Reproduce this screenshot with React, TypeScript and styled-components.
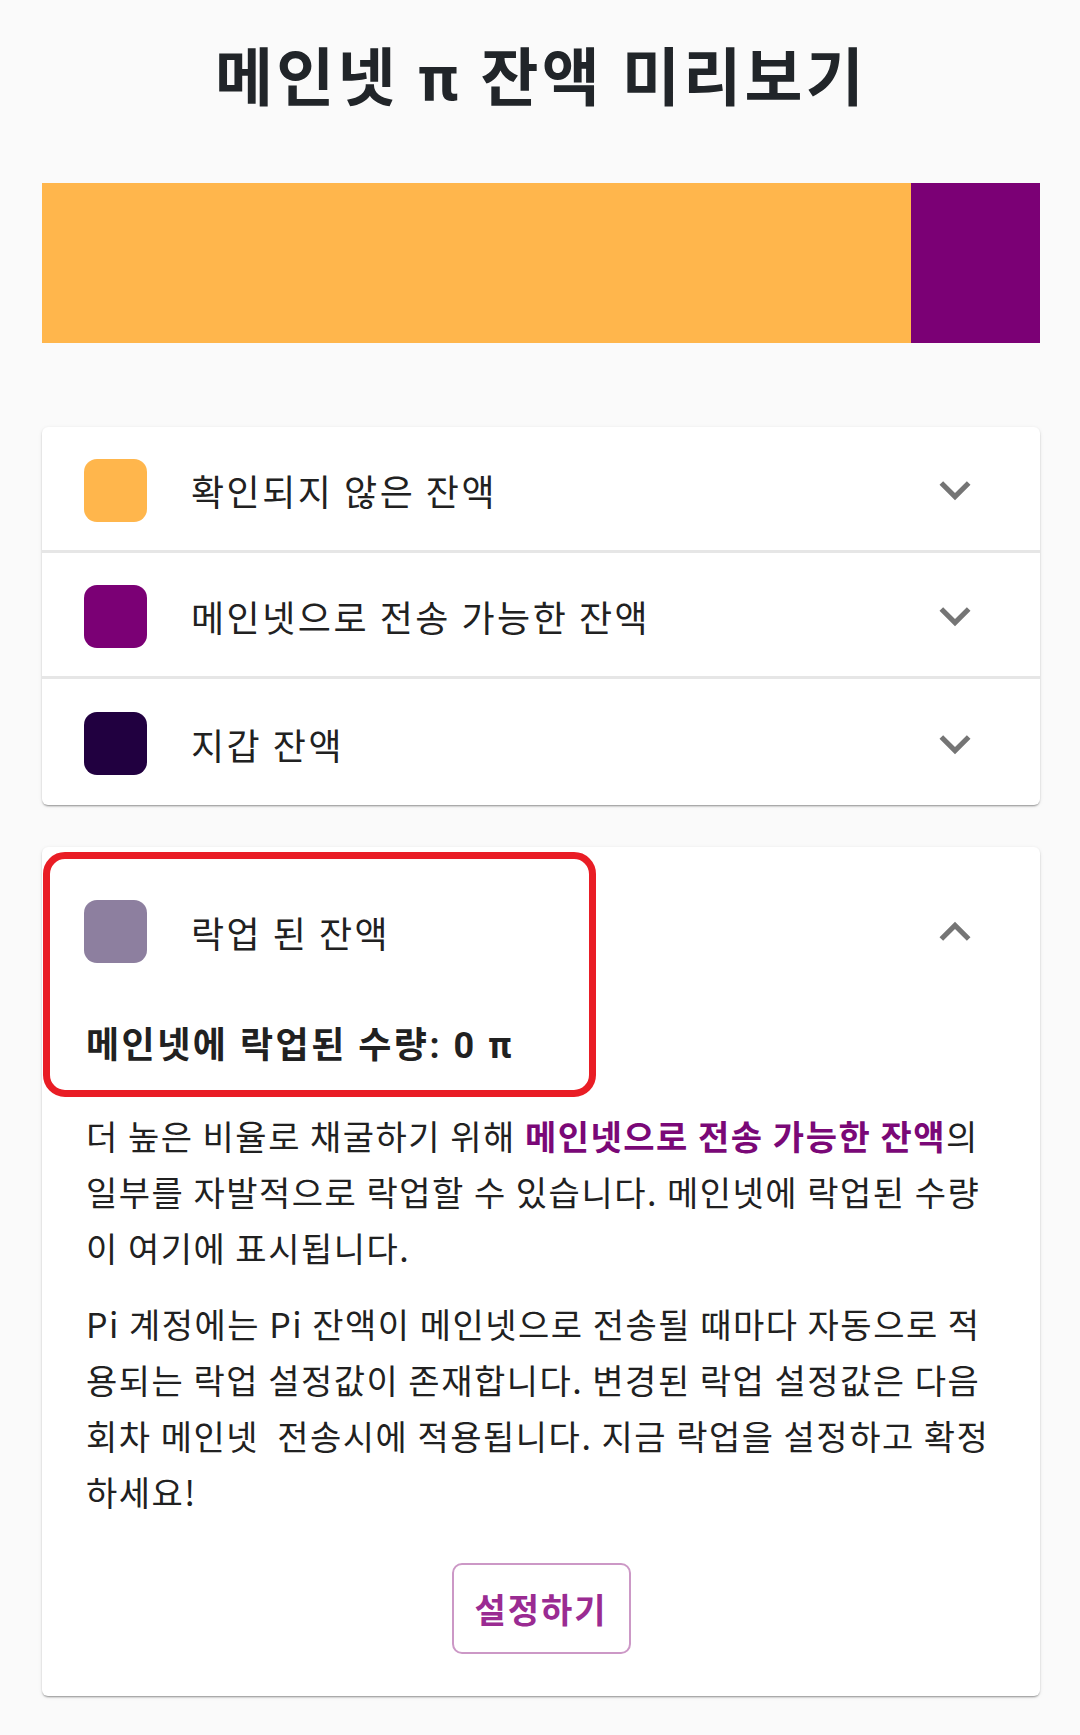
import React from "react";
import styled, { createGlobalStyle } from "styled-components";

const GlobalStyle = createGlobalStyle`
  html, body { margin: 0; padding: 0; background: #fafafa; }
  body { font-family: Roboto, "Noto Sans CJK KR", sans-serif; color: #212121; }
`;

const Page = styled.div`
  width: 1080px;
  min-height: 1735px;
  padding: 0 40px 40px 42px;
  box-sizing: border-box;
  display: flex;
  flex-direction: column;
`;

const Title = styled.h1`
  margin: 0;
  padding-top: 42px;
  height: 74px;
  line-height: 74px;
  font-size: 63px;
  font-weight: 700;
  text-align: center;
  color: #212529;
  letter-spacing: 3.3px;
`;

const Bar = styled.div`
  margin-top: 67px;
  height: 160px;
  display: flex;
`;

const Segment = styled.div<{ $color: string; $grow: number }>`
  flex: ${(p) => p.$grow} 0 0;
  background: ${(p) => p.$color};
`;

const Card = styled.div<{ $mt: number }>`
  position: relative;
  margin-top: ${(p) => p.$mt}px;
  background: #fff;
  border-radius: 6px;
  box-shadow: 0 2px 2px -1px rgba(0, 0, 0, 0.3), 0 1px 2px rgba(0, 0, 0, 0.12),
    0 1px 4px rgba(0, 0, 0, 0.08);
  display: flex;
  flex-direction: column;
`;

const Row = styled.div<{ $divider?: boolean; $h: number }>`
  display: flex;
  align-items: center;
  padding: 3px 54px 0 42px;
  box-sizing: border-box;
  border-top: ${(p) => (p.$divider ? "3px solid #e6e6e6" : "none")};
  height: ${(p) => p.$h}px;
`;

const Swatch = styled.div<{ $color: string }>`
  width: 63px;
  height: 63px;
  border-radius: 13px;
  background: ${(p) => p.$color};
  flex: none;
`;

const Label = styled.span`
  margin-left: 44px;
  flex: 1;
  font-size: 36px;
  letter-spacing: 2.5px;
  color: #212121;
  font-family: "Noto Sans CJK KR", sans-serif;
`;

const Chevron = styled.svg`
  width: 62px;
  height: 62px;
  fill: #757575;
  flex: none;
`;

const Expanded = styled.div`
  padding: 53px 44px 42px 42px;
  display: flex;
  flex-direction: column;
`;

const HeaderRow = styled.div`
  height: 63px;
  display: flex;
  align-items: center;
  padding-right: 10px;
`;

const Amount = styled.div`
  margin-top: 58px;
  font-size: 36px;
  line-height: 50px;
  font-weight: 700;
  letter-spacing: 2.5px;
  color: #212121;
  padding-left: 2px;
`;

const Para = styled.p<{ $mt: number }>`
  margin: ${(p) => p.$mt}px 0 0 2px;
  font-size: 34px;
  letter-spacing: 1.5px;
  line-height: 56px;
  color: #212121;
  white-space: pre-wrap;
  font-family: "Noto Sans CJK KR", sans-serif;
`;

const Link = styled.span`
  font-weight: 700;
  color: #7a0877;
`;

const ButtonRow = styled.div`
  margin-top: 43px;
  display: flex;
  justify-content: center;
  padding-left: 2px;
`;

const Button = styled.button`
  width: 179px;
  height: 91px;
  border: 2px solid #cc98c6;
  border-radius: 10px;
  background: #fff;
  color: #9a2b92;
  font-size: 34px;
  letter-spacing: 2px;
  font-weight: 700;
  font-family: "Noto Sans CJK KR", sans-serif;
  cursor: pointer;
`;

const Highlight = styled.div`
  position: absolute;
  left: 1px;
  top: 5px;
  width: 553px;
  height: 245px;
  border: 7px solid #e91d25;
  border-radius: 22px;
  box-sizing: border-box;
  pointer-events: none;
`;

const ExpandMore = () => (
  <Chevron viewBox="0 0 24 24">
    <path d="M16.59 8.59 12 13.17 7.41 8.59 6 10l6 6 6-6z" />
  </Chevron>
);

const ExpandLess = () => (
  <Chevron viewBox="0 0 24 24">
    <path d="m12 8-6 6 1.41 1.41L12 10.83l4.59 4.58L18 14z" />
  </Chevron>
);

const rows = [
  { color: "#ffb64c", label: "확인되지 않은 잔액", h: 123 },
  { color: "#7b0075", label: "메인넷으로 전송 가능한 잔액", h: 126 },
  { color: "#210040", label: "지갑 잔액", h: 129 },
];

export default function App() {
  return (
    <>
      <GlobalStyle />
      <Page>
        <Title>메인넷 π 잔액 미리보기</Title>
        <Bar>
          <Segment $color="#ffb64c" $grow={869} />
          <Segment $color="#7b0075" $grow={129} />
        </Bar>
        <Card $mt={84}>
          {rows.map((r, i) => (
            <Row key={r.label} $divider={i > 0} $h={r.h}>
              <Swatch $color={r.color} />
              <Label>{r.label}</Label>
              <ExpandMore />
            </Row>
          ))}
        </Card>
        <Card $mt={42}>
          <Expanded>
            <HeaderRow>
              <Swatch $color="#8d7f9f" />
              <Label>락업 된 잔액</Label>
              <ExpandLess />
            </HeaderRow>
            <Amount>메인넷에 락업된 수량: 0 π</Amount>
            <Para $mt={37}>
              더 높은 비율로 채굴하기 위해 <Link>메인넷으로 전송 가능한 잔액</Link>의 일부를 자발적으로 락업할 수
              있습니다. 메인넷에 락업된 수량이 여기에 표시됩니다.
            </Para>
            <Para $mt={20}>
              Pi 계정에는 Pi 잔액이 메인넷으로 전송될 때마다 자동으로 적용되는 락업 설정값이 존재합니다. 변경된 락업
              설정값은 다음 회차 메인넷{"  "}전송시에 적용됩니다. 지금 락업을 설정하고 확정하세요!
            </Para>
            <ButtonRow>
              <Button>설정하기</Button>
            </ButtonRow>
          </Expanded>
          <Highlight />
        </Card>
      </Page>
    </>
  );
}
